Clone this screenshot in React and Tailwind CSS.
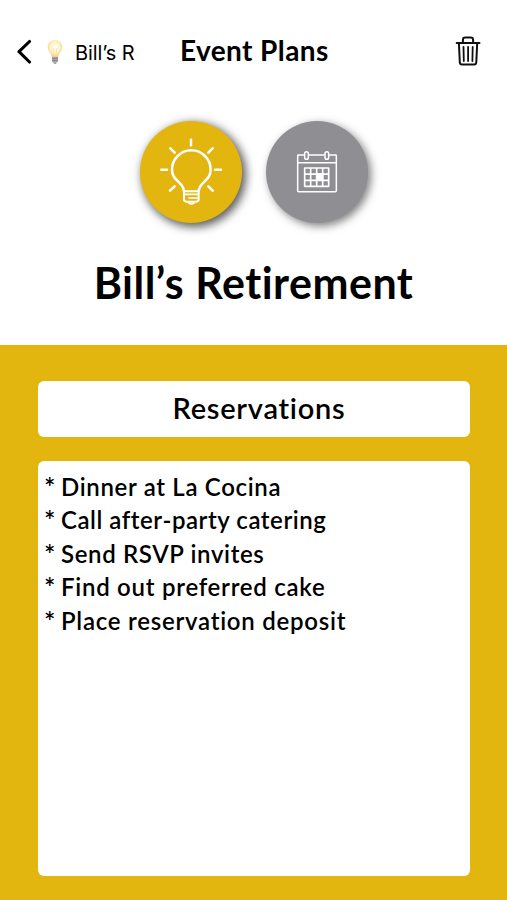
const tasks = [
    { text: "Dinner at La Cocina", spacing: "tracking-[0.67px]" },
    { text: "Call after-party catering", spacing: "tracking-[0.55px]" },
    { text: "Send RSVP invites", spacing: "tracking-[0.63px]" },
    { text: "Find out preferred cake", spacing: "tracking-[0.73px]" },
    { text: "Place reservation deposit", spacing: "tracking-[0.75px]" },
];

const BackIcon = () => (
    <svg className="h-[26px] w-[18px]" viewBox="0 0 18 26" fill="none" stroke="#000" strokeWidth="3.1" strokeLinecap="round" strokeLinejoin="round">
        <path d="M15.5 3.5 L5 13.7 L15.5 24" />
    </svg>
);

const SmallBulb = () => (
    <svg className="h-[26px] w-[16px]" viewBox="0 0 16 26">
        <defs>
            <radialGradient id="glow" cx="50%" cy="42%" r="60%">
                <stop offset="0" stopColor="#fffef0" />
                <stop offset="0.55" stopColor="#fff3c4" />
                <stop offset="1" stopColor="#efc77c" />
            </radialGradient>
        </defs>
        <path d="M8 1 C3.6 1 .8 4.2 .8 8.2 C.8 12 4.3 14.4 4.9 18 H11.1 C11.7 14.4 15.2 12 15.2 8.2 C15.2 4.2 12.4 1 8 1Z" fill="url(#glow)" />
        <path d="M6.2 9 L7.2 17 M9.8 9 L8.8 17" fill="none" stroke="#f3e0a6" strokeWidth=".7" />
        <path d="M4.9 18 H11.1 V22 Q11 23 9.8 23.4 L8.9 25 H7.1 L6.2 23.4 Q5 23 4.9 22Z" fill="#aaa7ad" />
        <path d="M5 19.8 L11 19.2 M5 21.8 L11 21.2" stroke="#77727c" strokeWidth=".7" />
    </svg>
);

const TrashIcon = () => (
    <svg className="h-[32px] w-[28px]" viewBox="0 0 28 32" fill="none" stroke="#111" strokeWidth="2" strokeLinecap="round" strokeLinejoin="round">
        <path d="M2.7 8 H25.5" />
        <path d="M8.9 8 V5 Q8.9 2.6 11.2 2.6 H16.8 Q19.1 2.6 19.1 5 V8" />
        <path d="M4.9 8 L5.8 27.3 Q6 29.4 7.9 29.4 H20.2 Q22.1 29.4 22.3 27.3 L23.2 8" />
        <path d="M9.5 12 L9.8 26 M14.1 12 V26 M18.7 12 L18.4 26" strokeWidth="1.8" />
    </svg>
);

const IdeaIcon = () => (
    <svg className="size-full" viewBox="0 0 306 306" fill="none" stroke="#fff" strokeWidth="7.5" strokeLinecap="round" strokeLinejoin="round">
        <path d="M132 211 C132 183 96 181 96 146 A58 58 0 0 1 212 146 C212 181 176 183 176 211" />
        <path d="M132 211 H176 V235 Q176 242 169 242 H139 Q132 242 132 235Z" strokeWidth="6" />
        <path d="M134 220 H172 M147 231 H174 M146 246 Q154 251 162 246" strokeWidth="5" />
        <path d="M153 56 V73 M64 146 H81 M225 146 H243 M91 82 L104 95 M218 82 L205 95 M90 209 L104 196 M218 209 L205 196" />
    </svg>
);

const CalendarIcon = () => (
    <svg className="size-full" viewBox="0 0 306 306" fill="none" stroke="#fff" strokeWidth="4.5" strokeLinejoin="round">
        <path d="M115 102 H97 Q95 102 95 104 V209 Q95 212 98 212 H208 Q211 212 211 209 V104 Q211 102 209 102 H189 M128 102 H175 M95 125 H211" />
        <rect x="116" y="92" width="11" height="23" rx="5.5" />
        <rect x="177" y="92" width="11" height="23" rx="5.5" />
        <path d="M116 141 H188 V196 H116Z M134 141 V196 M152 141 V196 M170 141 V196 M116 159.5 H188 M116 178 H188" strokeWidth="5" />
        <path d="M152 159 H170 V178 H152Z" fill="#fff" />
    </svg>
);

const App = () => {
    return (
        <div className="flex h-[900px] w-[507px] flex-col overflow-hidden bg-white font-['Lato',sans-serif] font-bold text-black">
            <header className="grid h-[102px] grid-cols-[180px_147px_180px] items-center">
                <div className="flex items-center pl-[14px]">
                    <BackIcon />
                    <span className="ml-[15px] pt-[2px]"><SmallBulb /></span>
                    <span className="ml-[12px] whitespace-nowrap pt-[3px] font-['Inter',sans-serif] text-[20px] font-normal tracking-[-0.1px]">Bill’s R</span>
                </div>
                <h1 className="whitespace-nowrap pb-[3px] text-center text-[28px] leading-[34px] tracking-[0.4px]">Event Plans</h1>
                <div className="flex justify-end pr-[25px]">
                    <TrashIcon />
                </div>
            </header>

            <div className="mt-[19px] flex gap-[24px] pl-[140px]">
                <div className="size-[102px] rounded-full bg-[#e3b60f] shadow-[3px_3px_10px_1px_rgba(0,0,0,0.65)]">
                    <IdeaIcon />
                </div>
                <div className="size-[102px] rounded-full bg-[#8f8e93] shadow-[3px_3px_8px_0px_rgba(0,0,0,0.5)]">
                    <CalendarIcon />
                </div>
            </div>

            <h2 className="flex h-[122px] items-center justify-center whitespace-nowrap pb-[3px] text-[43px] leading-[52px] tracking-[0.5px]">Bill’s Retirement</h2>

            <main className="flex flex-1 flex-col gap-[24px] bg-[#e3b60f] pt-[36px] pr-[37px] pb-[24px] pl-[38px]">
                <div className="flex h-[56px] items-center justify-center rounded-md bg-white pb-[2px] pl-[10px] text-[29px] font-semibold tracking-[0.75px]">Reservations</div>
                <ul className="flex-1 rounded-md bg-white pt-[9px] pl-[6px]">
                    {tasks.map((task) => (
                        <li key={task.text} className="flex text-[24px] leading-[33.4px] font-semibold">
                            <span className="w-[17px] text-[27px]">*</span>
                            <span className={task.spacing}>{task.text}</span>
                        </li>
                    ))}
                </ul>
            </main>
        </div>
    );
};

export default App;
